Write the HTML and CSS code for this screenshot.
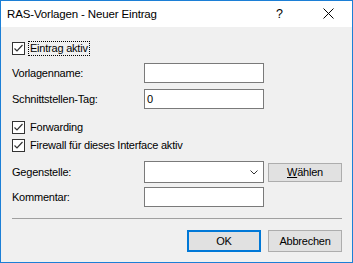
FILE: index.html
```html
<!DOCTYPE html>
<html lang="de">
  <head>
    <meta charset="utf-8">
    <title>RAS-Vorlagen - Neuer Eintrag</title>
    <link rel="stylesheet" href="styles.css">
  </head>
  <body>
    <div class="window">
      <div class="titlebar">
        <span class="title">RAS-Vorlagen - Neuer Eintrag</span>
        <span class="help">?</span>
        <span class="close">
          <svg width="11" height="11" viewBox="0 0 11 11"><path d="M0.5 0.5 L10.5 10.5 M10.5 0.5 L0.5 10.5" stroke="#000" stroke-width="1" fill="none"/></svg>
        </span>
      </div>

      <div class="content">
        <div class="row check_row first">
          <span class="box"><svg width="11" height="11" viewBox="0 0 11 11"><path d="M1.5 5.5 L4 8 L9.5 2" stroke="#333" stroke-width="1.2" fill="none"/></svg></span>
          <span class="check_label focused">Eintrag aktiv</span>
        </div>

        <div class="row field_row r_name">
          <span class="label">Vorlagenname:</span>
          <span class="input"></span>
        </div>

        <div class="row field_row r_tag">
          <span class="label">Schnittstellen-Tag:</span>
          <span class="input">0</span>
        </div>

        <div class="row check_row r_fwd">
          <span class="box"><svg width="11" height="11" viewBox="0 0 11 11"><path d="M1.5 5.5 L4 8 L9.5 2" stroke="#333" stroke-width="1.2" fill="none"/></svg></span>
          <span class="check_label">Forwarding</span>
        </div>

        <div class="row check_row r_fw">
          <span class="box"><svg width="11" height="11" viewBox="0 0 11 11"><path d="M1.5 5.5 L4 8 L9.5 2" stroke="#333" stroke-width="1.2" fill="none"/></svg></span>
          <span class="check_label">Firewall für dieses Interface aktiv</span>
        </div>

        <div class="row field_row r_peer">
          <span class="label">Gegenstelle:</span>
          <span class="input combo">
            <svg width="8" height="5" viewBox="0 0 8 5"><path d="M0.5 0.5 L4 4 L7.5 0.5" stroke="#333" stroke-width="1" fill="none"/></svg>
          </span>
          <span class="button side"><u>W</u>ählen</span>
        </div>

        <div class="row field_row r_note">
          <span class="label">Kommentar:</span>
          <span class="input"></span>
        </div>

        <div class="separator"></div>

        <div class="buttons">
          <span class="button default">OK</span>
          <span class="button">Abbrechen</span>
        </div>
      </div>
    </div>
  </body>
</html>
```

FILE: styles.css
```css
body {
  margin: 0;
  font-family: "Liberation Sans", Arial, sans-serif;
  font-size: 11px;
  letter-spacing: -0.22px;
  color: #000;
}

.window {
  width: 353px;
  height: 263px;
  box-sizing: border-box;
  border: 1px solid #1c7fd6;
  background-color: #f0f0f0;
  display: flex;
  flex-direction: column;
}

.titlebar {
  height: 26px;
  background-color: #fff;
  display: flex;
  align-items: center;
}

.title {
  flex: 1;
  padding-left: 6px;
  font-size: 11.5px;
  letter-spacing: -0.15px;
}

.help {
  width: 12px;
  font-size: 12.5px;
  margin-right: 35px;
}

.close {
  width: 11px;
  height: 11px;
  margin-right: 18px;
  margin-top: -1px;
}

.close svg {
  display: block;
}

.content {
  padding: 0 10px 0 11px;
}

.row {
  display: flex;
  align-items: center;
}

.check_row {
  height: 14px;
}

.box {
  width: 11px;
  height: 11px;
  border: 1px solid #333;
  background-color: #fff;
  margin-right: 3px;
}

.box svg {
  display: block;
}

.check_label {
  padding: 0 1px;
  line-height: 13px;
  border: 1px solid transparent;
}

.focused {
  border: 1px dotted #000;
}

.first { margin-top: 14px; }
.r_name { margin-top: 8px; }
.r_tag { margin-top: 6px; }
.r_fwd { margin-top: 11px; }
.r_fw { margin-top: 4px; }
.r_peer { margin-top: 9px; }
.r_note { margin-top: 4px; }

.field_row {
  height: 20px;
}

.label {
  width: 132px;
}

.input {
  width: 116px;
  height: 18px;
  border: 1px solid #7a7a7a;
  background-color: #fff;
  padding-left: 2px;
  line-height: 18px;
}

.r_peer {
  height: 22px;
}

.combo {
  height: 20px;
  display: flex;
  align-items: center;
  justify-content: flex-end;
}

.combo svg {
  margin-right: 5px;
}

.button {
  width: 72px;
  height: 20px;
  border: 1px solid #adadad;
  background-color: #e1e1e1;
  display: flex;
  align-items: center;
  justify-content: center;
}

.side {
  height: 17px;
  margin-left: 4px;
}

.separator {
  height: 1px;
  background-color: #a0a0a0;
  margin-top: 11px;
}

.buttons {
  display: flex;
  justify-content: flex-end;
  gap: 7px;
  margin-top: 11px;
}

.default {
  width: 70px;
  height: 18px;
  border: 2px solid #0078d7;
}
```
